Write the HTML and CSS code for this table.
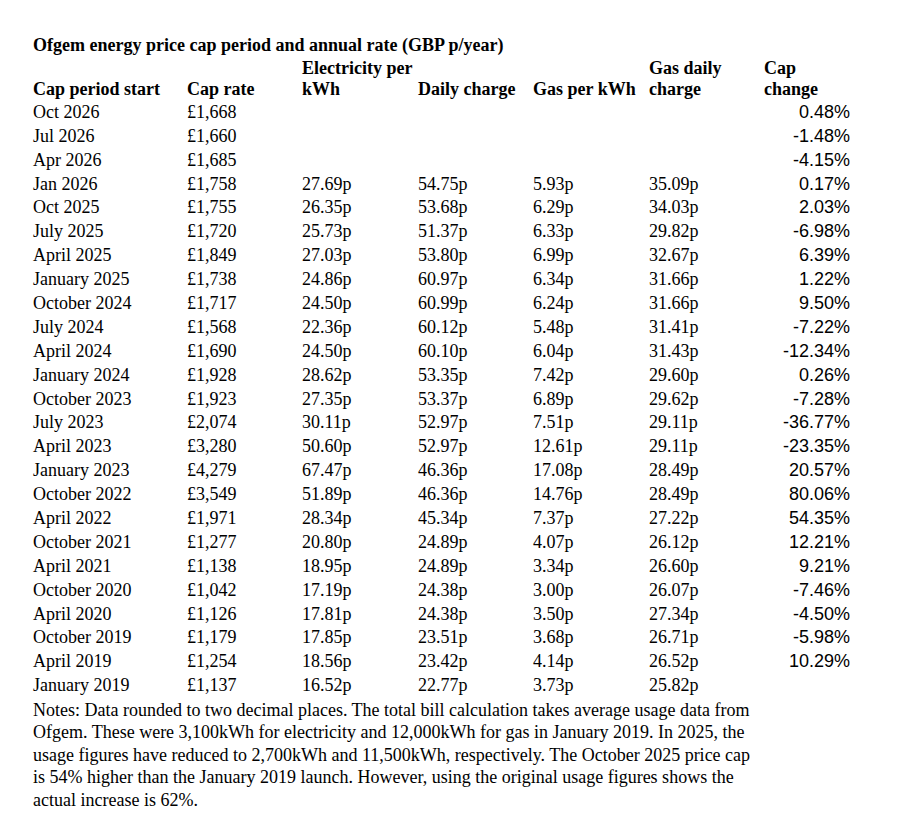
FILE: index.html
```html
<!DOCTYPE html>
<html lang="en">
<head>
<meta charset="utf-8">
<title>Ofgem energy price cap</title>
<link rel="stylesheet" href="styles.css">
</head>
<body>
<div class="page">
  <div class="title">Ofgem energy price cap period and annual rate (GBP p/year)</div>
  <table class="cap-table">
    <colgroup>
      <col class="c1"><col class="c2"><col class="c3"><col class="c4"><col class="c5"><col class="c6"><col class="c7">
    </colgroup>
    <thead>
      <tr>
        <th>Cap period start</th>
        <th>Cap rate</th>
        <th>Electricity per kWh</th>
        <th>Daily charge</th>
        <th>Gas per kWh</th>
        <th>Gas daily charge</th>
        <th>Cap change</th>
      </tr>
    </thead>
    <tbody>
      <tr><td>Oct 2026</td><td>£1,668</td><td></td><td></td><td></td><td></td><td class="pct">0.48%</td></tr>
      <tr><td>Jul 2026</td><td>£1,660</td><td></td><td></td><td></td><td></td><td class="pct">-1.48%</td></tr>
      <tr><td>Apr 2026</td><td>£1,685</td><td></td><td></td><td></td><td></td><td class="pct">-4.15%</td></tr>
      <tr><td>Jan 2026</td><td>£1,758</td><td>27.69p</td><td>54.75p</td><td>5.93p</td><td>35.09p</td><td class="pct">0.17%</td></tr>
      <tr><td>Oct 2025</td><td>£1,755</td><td>26.35p</td><td>53.68p</td><td>6.29p</td><td>34.03p</td><td class="pct">2.03%</td></tr>
      <tr><td>July 2025</td><td>£1,720</td><td>25.73p</td><td>51.37p</td><td>6.33p</td><td>29.82p</td><td class="pct">-6.98%</td></tr>
      <tr><td>April 2025</td><td>£1,849</td><td>27.03p</td><td>53.80p</td><td>6.99p</td><td>32.67p</td><td class="pct">6.39%</td></tr>
      <tr><td>January 2025</td><td>£1,738</td><td>24.86p</td><td>60.97p</td><td>6.34p</td><td>31.66p</td><td class="pct">1.22%</td></tr>
      <tr><td>October 2024</td><td>£1,717</td><td>24.50p</td><td>60.99p</td><td>6.24p</td><td>31.66p</td><td class="pct">9.50%</td></tr>
      <tr><td>July 2024</td><td>£1,568</td><td>22.36p</td><td>60.12p</td><td>5.48p</td><td>31.41p</td><td class="pct">-7.22%</td></tr>
      <tr><td>April 2024</td><td>£1,690</td><td>24.50p</td><td>60.10p</td><td>6.04p</td><td>31.43p</td><td class="pct">-12.34%</td></tr>
      <tr><td>January 2024</td><td>£1,928</td><td>28.62p</td><td>53.35p</td><td>7.42p</td><td>29.60p</td><td class="pct">0.26%</td></tr>
      <tr><td>October 2023</td><td>£1,923</td><td>27.35p</td><td>53.37p</td><td>6.89p</td><td>29.62p</td><td class="pct">-7.28%</td></tr>
      <tr><td>July 2023</td><td>£2,074</td><td>30.11p</td><td>52.97p</td><td>7.51p</td><td>29.11p</td><td class="pct">-36.77%</td></tr>
      <tr><td>April 2023</td><td>£3,280</td><td>50.60p</td><td>52.97p</td><td>12.61p</td><td>29.11p</td><td class="pct">-23.35%</td></tr>
      <tr><td>January 2023</td><td>£4,279</td><td>67.47p</td><td>46.36p</td><td>17.08p</td><td>28.49p</td><td class="pct">20.57%</td></tr>
      <tr><td>October 2022</td><td>£3,549</td><td>51.89p</td><td>46.36p</td><td>14.76p</td><td>28.49p</td><td class="pct">80.06%</td></tr>
      <tr><td>April 2022</td><td>£1,971</td><td>28.34p</td><td>45.34p</td><td>7.37p</td><td>27.22p</td><td class="pct">54.35%</td></tr>
      <tr><td>October 2021</td><td>£1,277</td><td>20.80p</td><td>24.89p</td><td>4.07p</td><td>26.12p</td><td class="pct">12.21%</td></tr>
      <tr><td>April 2021</td><td>£1,138</td><td>18.95p</td><td>24.89p</td><td>3.34p</td><td>26.60p</td><td class="pct">9.21%</td></tr>
      <tr><td>October 2020</td><td>£1,042</td><td>17.19p</td><td>24.38p</td><td>3.00p</td><td>26.07p</td><td class="pct">-7.46%</td></tr>
      <tr><td>April 2020</td><td>£1,126</td><td>17.81p</td><td>24.38p</td><td>3.50p</td><td>27.34p</td><td class="pct">-4.50%</td></tr>
      <tr><td>October 2019</td><td>£1,179</td><td>17.85p</td><td>23.51p</td><td>3.68p</td><td>26.71p</td><td class="pct">-5.98%</td></tr>
      <tr><td>April 2019</td><td>£1,254</td><td>18.56p</td><td>23.42p</td><td>4.14p</td><td>26.52p</td><td class="pct">10.29%</td></tr>
      <tr><td>January 2019</td><td>£1,137</td><td>16.52p</td><td>22.77p</td><td>3.73p</td><td>25.82p</td><td class="pct"></td></tr>
    </tbody>
  </table>
  <p class="notes">Notes: Data rounded to two decimal places. The total bill calculation takes average usage data from Ofgem. These were 3,100kWh for electricity and 12,000kWh for gas in January 2019. In 2025, the usage figures have reduced to 2,700kWh and 11,500kWh, respectively. The October 2025 price cap is 54% higher than the January 2019 launch. However, using the original usage figures shows the actual increase is 62%.</p>
</div>
</body>
</html>
```

FILE: styles.css
```css
html, body {
  margin: 0;
  padding: 0;
  background: #ffffff;
}

body {
  font-family: "Liberation Serif", "Times New Roman", serif;
  font-size: 18px;
  color: #000000;
}

.page {
  padding: 35px 0 0 33px;
}

.title {
  font-weight: bold;
  line-height: 20.7px;
  margin-bottom: 1px;
}

.cap-table {
  border-collapse: separate;
  border-spacing: 0;
  table-layout: fixed;
  width: 817px;
}

.c1 { width: 154px; }
.c2 { width: 115px; }
.c3 { width: 116px; }
.c4 { width: 115px; }
.c5 { width: 116px; }
.c6 { width: 115px; }
.c7 { width: 86px; }

.cap-table th,
.cap-table td {
  padding: 1.6px 0;
  line-height: 20.7px;
  text-align: left;
  white-space: nowrap;
}

.cap-table th {
  font-weight: bold;
  vertical-align: bottom;
  white-space: normal;
  padding: 1.6px 2px 0.6px 0;
}

.cap-table td.pct {
  font-family: "Liberation Sans", Arial, sans-serif;
  text-align: right;
}

.notes {
  margin: 1px 0 0;
  width: 728px;
  line-height: 22.5px;
}
```
